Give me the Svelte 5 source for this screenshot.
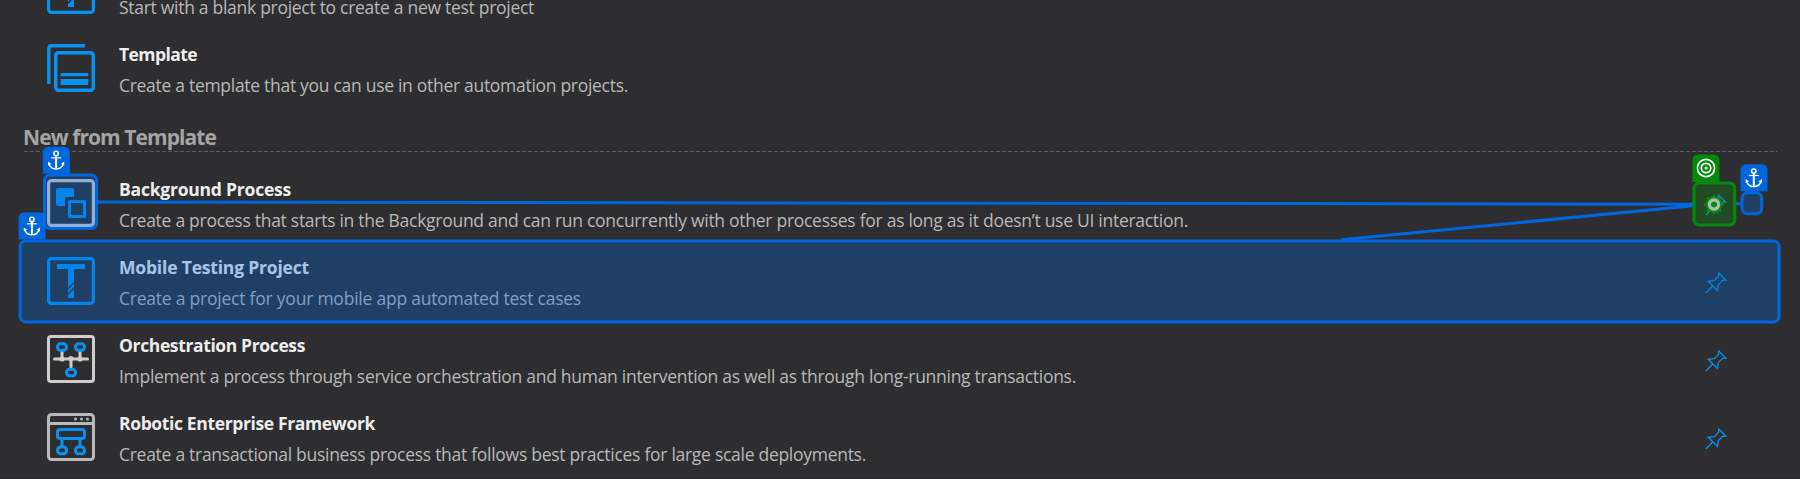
<script>
  const rows = [
    { id: 'test', text: 'Start with a blank project to create a new test project', width: 415 },
    { id: 'template', title: 'Template', titleWidth: 78, text: 'Create a template that you can use in other automation projects.', width: 509 }
  ];
  const templates = [
    { id: 'background', title: 'Background Process', titleWidth: 172, text: 'Create a process that starts in the Background and can run concurrently with other processes for as long as it doesn’t use UI interaction.', width: 1069 },
    { id: 'test', title: 'Mobile Testing Project', titleWidth: 190, text: 'Create a project for your mobile app automated test cases', width: 462 },
    { id: 'orchestration', title: 'Orchestration Process', titleWidth: 186, text: 'Implement a process through service orchestration and human intervention as well as through long-running transactions.', width: 957 },
    { id: 'framework', title: 'Robotic Enterprise Framework', titleWidth: 256, text: 'Create a transactional business process that follows best practices for large scale deployments.', width: 747 }
  ];

  // Spreads the characters so that the label fills its nominal width.
  function fit(node, width) {
    const natural = node.getBoundingClientRect().width;
    node.style.letterSpacing = `${(width - natural) / node.textContent.length}px`;
  }
</script>

{#snippet icon(id)}
  <svg class="icon" viewBox="0 0 48 48" fill="none">
    {#if id === 'test'}
      <rect x="1.6" y="1.6" width="44.8" height="44.8" rx="3" stroke="#0792f2" stroke-width="3.2" />
      <path d="M10 7h28v5H27v12.500l-6 6V12H10zM27 26.700v3.300l-6 6v-3.300zM27 32.200V41h-6v-2.800z" fill="#0792f2" />
    {:else if id === 'template'}
      <path d="M1.8 40V4.5Q1.8 1.8 4.5 1.8H38" stroke="#0792f2" stroke-width="3.4" />
      <rect x="8.7" y="8.7" width="37.6" height="37.6" rx="3" stroke="#0792f2" stroke-width="3.5" />
      <path d="M13.7 29h27.6v3.2H13.7zM13.7 35h27.6v6H13.7z" fill="#0792f2" />
    {:else if id === 'background'}
      <rect x="1.6" y="1.6" width="44.8" height="44.8" rx="3" stroke="#d0d0d0" stroke-width="3.2" />
      <path d="M11 9h14q2 0 2 2v7h-7q-2 0-2 2v7h-7q-2 0-2-2V11q0-2 2-2z" fill="#0792f2" />
      <rect x="22.5" y="22.5" width="15" height="15" stroke="#0792f2" stroke-width="3" stroke-linejoin="round" />
    {:else if id === 'orchestration'}
      <rect x="1.5" y="1.5" width="45" height="45" rx="2.5" stroke="#cecece" stroke-width="3" />
      <path d="M7.5 24h33M15 16v8M33 16v8M24 24v10" stroke="#cecece" stroke-width="3" stroke-linecap="round" />
      <g fill="#cecece"><circle cx="15" cy="24" r="2.6" /><circle cx="24" cy="23.5" r="2.6" /><circle cx="33" cy="24" r="2.6" /></g>
      <g stroke="#0792f2" stroke-width="3"><rect x="10.5" y="8.7" width="9" height="6.6" rx="3" /><rect x="28.5" y="8.7" width="9" height="6.6" rx="3" /><rect x="19.5" y="34.2" width="9" height="6.6" rx="3" /></g>
    {:else}
      <rect x="1.5" y="1.5" width="45" height="45" rx="3" stroke="#b9b9b9" stroke-width="3" />
      <path d="M2 10.5h44" stroke="#b9b9b9" stroke-width="3" />
      <g fill="#b9b9b9"><circle cx="28.5" cy="6" r="1.5" /><circle cx="34.5" cy="6" r="1.5" /><circle cx="40.5" cy="6" r="1.5" /></g>
      <g stroke="#0792f2" stroke-width="3"><rect x="10.5" y="16.5" width="27" height="9" rx="2.5" /><path d="M15 26v8M33 26v8" /><rect x="10.5" y="34" width="9" height="6.8" rx="3" /><rect x="28.5" y="34" width="9" height="6.8" rx="3" /></g>
    {/if}
  </svg>
{/snippet}

{#snippet row(item, pinned)}
  <li class="row">
    {@render icon(item.id)}
    <div class="copy">
      {#if item.title}<strong><span use:fit={item.titleWidth}>{item.title}</span></strong>{/if}
      <p><span use:fit={item.width}>{item.text}</span></p>
    </div>
    {#if pinned}
      <svg class="pin" viewBox="0 0 22 22" fill="none" stroke="#0792f2" stroke-width="1.3">
        <path d="M.8 21 8 13.7M3.2 9.3 12.4 18.4 13.3 12.6 17.7 8.3 20.7 8.2 13.8 1 13.6 4.3 9.3 8.6Z" />
      </svg>
    {/if}
  </li>
{/snippet}

{#snippet anchor(x, y)}
  <g transform="translate({x} {y})">
    <path d="M0 27V6Q0 0 6 0h15q6 0 6 6v21z" fill="#0067df" />
    <g stroke="#fff" fill="none" stroke-width="1.5">
      <circle cx="13.3" cy="6.8" r="2.2" />
      <path d="M13.3 9v13" stroke-width="2" />
      <path d="M8.3 11.2h10" stroke-width="1.2" />
      <path d="M6.2 17.2q1.5 5 7.1 5t7.1-5" />
    </g>
    <path d="M5.2 18.8V14.8l3.3 2.4zM21.4 18.8V14.8l-3.3 2.4z" fill="#fff" />
  </g>
{/snippet}

<main>
  <ul class="first">
    {#each rows as item}{@render row(item, false)}{/each}
  </ul>
  <section>
    <header><h2><span use:fit={193}>New from Template</span></h2><div class="rule"></div></header>
    <ul>
      {#each templates as item}{@render row(item, true)}{/each}
    </ul>
  </section>

  <svg class="overlay" viewBox="0 0 1800 479" fill="none">
    <g stroke="#0067df" stroke-width="3">
      <path d="M98 202 1693 204.2M1341 239.8 1693 205.8M1736 203.7h5" />
      <g fill="#0067df" fill-opacity=".3">
        <rect x="20.2" y="240.9" width="1758.8" height="81" rx="5.5" />
        <rect x="44.6" y="175" width="52" height="53.5" rx="5.5" />
        <rect x="1742" y="192.8" width="19.7" height="21" rx="5.5" />
      </g>
    </g>
    {@render anchor(42.8, 146.7)}
    {@render anchor(18.6, 212.6)}
    {@render anchor(1740.5, 164.3)}
    <rect x="1694" y="183" width="40.7" height="42" rx="5.5" stroke="#038a0c" stroke-width="3.2" fill="#038a0c" fill-opacity=".3" />
    <path d="M1692.4 182v-21.5q0-6 6-6h15q6 0 6 6v21.5z" fill="#038a0c" />
    <g stroke="#fff" stroke-width="1.7"><circle cx="1706" cy="168" r="8.6" /><circle cx="1706" cy="168" r="4.7" /></g>
    <circle cx="1706" cy="168" r="1.5" fill="#fff" />
    <circle cx="1714" cy="204.5" r="7.1" stroke="#088f10" stroke-width="2.2" />
    <path d="M1714 194.5v3m0 14v3m-10-10h3m14 0h3M1707 197.5l2 2m10 10 2 2m0-14-2 2m-10 10-2 2" stroke="#088f10" stroke-width="2" />
    <circle cx="1714" cy="204.5" r="4.5" stroke="#a9bdb5" stroke-width="3.4" />
    <circle cx="1714" cy="204.5" r="2.8" fill="#088f10" />
  </svg>
</main>

<style>
  :global(body) { background: #2e2e30; }
  main {
    position: relative;
    box-sizing: border-box;
    height: 479px;
    overflow: hidden;
    border-bottom: 1px solid #222224;
    background: #2e2e30;
    font: 17.5px/24px "Open Sans", "Noto Sans", sans-serif;
    color: #b8b8b8;
  }
  ul { list-style: none; margin: 0; padding: 0; }
  .first { margin-top: -49px; }
  .row { display: flex; height: 78px; box-sizing: border-box; padding: 15px 73px 0 47px; }
  .icon { width: 48px; height: 48px; flex: none; }
  .copy { flex: 1; display: flex; flex-direction: column; justify-content: flex-end; height: 55px; margin-left: 24px; margin-top: -2px; min-width: 0; white-space: nowrap; }
  strong { display: block; font-weight: 700; font-size: 17.5px; line-height: 24px; color: #ededed; }
  p { margin: 7px 0 0; }
  .pin { width: 22px; height: 22px; margin-top: 15px; flex: none; }
  header { height: 57px; box-sizing: border-box; padding: 16px 23px 0 24px; }
  h2 { margin: 0 0 0 -1px; font-size: 21px; line-height: 28px; font-weight: 700; color: #a4a4a4; }
  .rule { height: 1px; background: repeating-linear-gradient(90deg, #5c5c5c 0 4px, transparent 4px 6px); }
  .overlay { position: absolute; left: 0; top: 0; width: 1800px; height: 479px; }
</style>
